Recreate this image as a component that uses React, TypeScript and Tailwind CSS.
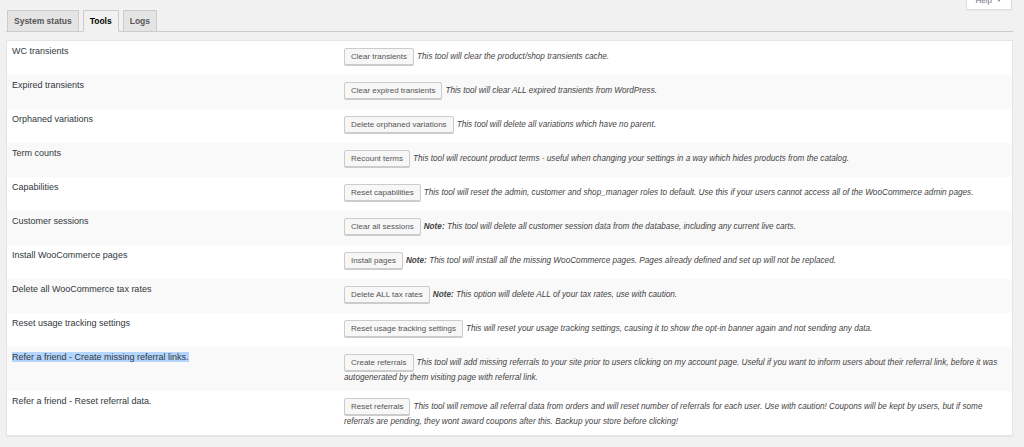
import React from "react";

// WooCommerce > Status > Tools — lista de ferramentas com botão + descrição.
type Tool = {
  label: string;
  button: string;
  note?: boolean;
  desc: string;
  selected?: boolean;
};

const tools: Tool[] = [
  { label: "WC transients", button: "Clear transients", desc: "This tool will clear the product/shop transients cache." },
  { label: "Expired transients", button: "Clear expired transients", desc: "This tool will clear ALL expired transients from WordPress." },
  { label: "Orphaned variations", button: "Delete orphaned variations", desc: "This tool will delete all variations which have no parent." },
  { label: "Term counts", button: "Recount terms", desc: "This tool will recount product terms - useful when changing your settings in a way which hides products from the catalog." },
  { label: "Capabilities", button: "Reset capabilities", desc: "This tool will reset the admin, customer and shop_manager roles to default. Use this if your users cannot access all of the WooCommerce admin pages." },
  { label: "Customer sessions", button: "Clear all sessions", note: true, desc: "This tool will delete all customer session data from the database, including any current live carts." },
  { label: "Install WooCommerce pages", button: "Install pages", note: true, desc: "This tool will install all the missing WooCommerce pages. Pages already defined and set up will not be replaced." },
  { label: "Delete all WooCommerce tax rates", button: "Delete ALL tax rates", note: true, desc: "This option will delete ALL of your tax rates, use with caution." },
  { label: "Reset usage tracking settings", button: "Reset usage tracking settings", desc: "This will reset your usage tracking settings, causing it to show the opt-in banner again and not sending any data." },
  { label: "Refer a friend - Create missing referral links.", button: "Create referrals", selected: true, desc: "This tool will add missing referrals to your site prior to users clicking on my account page. Useful if you want to inform users about their referral link, before it was autogenerated by them visiting page with referral link." },
  { label: "Refer a friend - Reset referral data.", button: "Reset referrals", desc: "This tool will remove all referral data from orders and will reset number of referrals for each user. Use with caution! Coupons will be kept by users, but if some referrals are pending, they wont award coupons after this. Backup your store before clicking!" },
];

function Tab({ label, active = false }: { label: string; active?: boolean }) {
  return (
    <div
      className={`-mb-px flex h-[22px] items-center border border-[#cccccc] px-[6px] text-[8.5px] font-bold ${
        active ? "border-b-[#f1f1f1] bg-[#f1f1f1] text-[#000000]" : "bg-[#e4e4e4] text-[#555555]"
      }`}
    >
      {label}
    </div>
  );
}

function Row({ t, odd }: { t: Tool; odd: boolean }) {
  return (
    <div className={`grid min-h-[34px] grid-cols-[330px_1fr] ${odd ? "bg-white" : "bg-[#f9f9f9]"}`}>
      <div className="px-[5px] pt-[4px] text-[9px] leading-[13px] text-[#32373c]">
        <span className={t.selected ? "bg-[#b4d5fe]" : ""}>{t.label}</span>
      </div>
      <div className="pt-[7px] pb-[6px] pr-[14px] pl-[7px] text-[8.2px] italic leading-[14px] text-[#444444]">
        <span className="mr-[3px] inline-flex h-[17px] items-center rounded-[2px] border border-[#cccccc] bg-[#f7f7f7] px-[6px] align-middle text-[8px] not-italic text-[#555555] shadow-[0_1px_0_#cccccc]">
          {t.button}
        </span>
        {t.note && <b className="font-bold">Note: </b>}
        {t.desc}
      </div>
    </div>
  );
}

export default function App() {
  return (
    <div className="min-h-[447px] bg-[#f1f1f1] pl-[6px] pr-[11px] font-['Liberation_Sans',Arial,sans-serif]">
      <div className="flex h-[10px] justify-end pr-[1px]">
        <div className="-mt-[8px] flex h-[18px] items-center gap-[4px] border border-t-0 border-[#dddddd] bg-white px-[9px] text-[8px] text-[#72777c] shadow-[0_1px_1px_rgba(0,0,0,0.04)]">
          Help <span className="text-[6px]">▼</span>
        </div>
      </div>
      <div className="flex gap-[4px] border-b border-[#cccccc] pl-[1px]">
        <Tab label="System status" />
        <Tab label="Tools" active />
        <Tab label="Logs" />
      </div>
      <div className="mt-[8px] border border-[#e5e5e5] bg-white shadow-[0_1px_1px_rgba(0,0,0,0.04)]">
        {tools.map((t, i) => (
          <Row key={t.label} t={t} odd={i % 2 === 0} />
        ))}
      </div>
    </div>
  );
}
